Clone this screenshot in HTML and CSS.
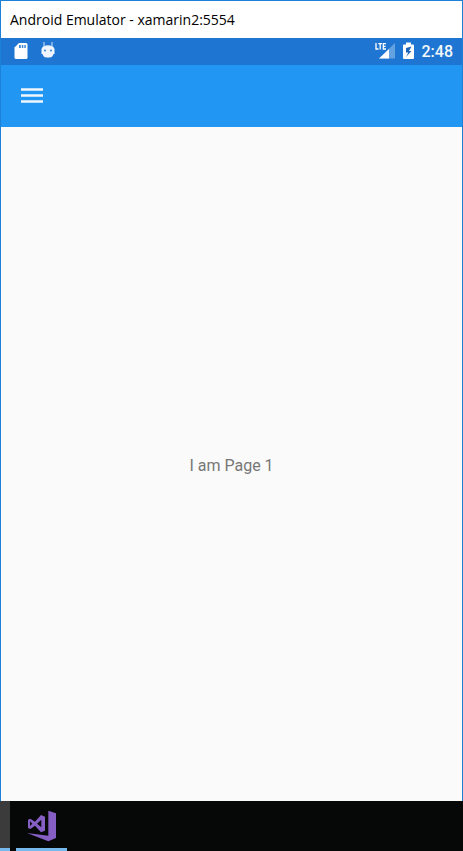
FILE: index.html
```html
<!DOCTYPE html>
<html lang="en">
<head>
<meta charset="utf-8">
<title>Android Emulator</title>
<meta name="viewport" content="width=device-width, initial-scale=1">
<link rel="stylesheet" href="styles.css">
</head>
<body>
<div class="window">
  <header class="titlebar">Android Emulator - xamarin2:5554</header>
  <div class="statusbar">
    <div class="status-group notices">
      <svg width="14" height="17" viewBox="0 0 14 17" aria-hidden="true">
        <path fill="#fff" d="M5 1h7q1.500 0 1.500 1.500v13q0 1.500-1.500 1.500H2q-1.500 0-1.500-1.500V5.500z"/>
        <path fill="#3f88d6" d="M5 3h1.800v3H5zM7.800 3h1.500v3H7.800zM10.300 3h1.500v3h-1.500z"/>
      </svg>
      <svg width="14" height="17" viewBox="0 0 14 17" aria-hidden="true">
        <path fill="none" stroke="#a9cbef" stroke-width="1.300" d="M3 0v4M11 0v4"/>
        <path fill="#eef5fd" d="M1.500 5Q3 3.300 7 3.300T12.500 5L13.500 7v5h-1q-1 3.500-4 3.500h-3q-3 0-4-3.500h-1V7z"/>
        <circle cx="4" cy="8.500" r=".9" fill="#1f76d2"/><circle cx="10" cy="8.500" r=".9" fill="#1f76d2"/>
      </svg>
    </div>
    <div class="status-group system">
      <svg width="20" height="17" viewBox="0 0 20 17" aria-hidden="true">
        <path fill="#63a1e0" d="M20 1v15.500H4z"/>
        <path fill="#fff" d="M14 7v9.500H4z"/>
        <path fill="#1f76d2" d="M0 0h12v8H0z"/>
        <path fill="none" stroke="#fff" stroke-width="1.300" d="M1 1v6h2.500M3.300 1.600h3.700M5.200 1.600v6M11 1.600H8.300V7H11M8.300 4.300h2.300"/>
      </svg>
      <svg width="11" height="17" viewBox="0 0 11 17" aria-hidden="true">
        <path fill="#fff" d="M3 0.500h5v2h2q1 0 1 1V16q0 1-1 1H1q-1 0-1-1V3.500q0-1 1-1h2z"/>
        <path fill="#1f66b8" d="M8.500 4.500L3 6v4.500h2.300L3 15l5.500-6H6z"/>
      </svg>
      <time class="clock">2:48</time>
    </div>
  </div>
  <nav class="appbar">
    <button class="menu" type="button" aria-label="Open menu">
      <svg width="22" height="16" viewBox="0 0 22 16" aria-hidden="true">
        <path fill="#eef6fe" d="M0 0.300h22v2.400H0zM0 6.300h22v2.400H0zM0 12.300h22v2.400H0z"/>
      </svg>
    </button>
  </nav>
  <main class="page">I am Page 1</main>
</div>
<footer class="taskbar">
  <span class="task previous"></span>
  <button class="task active" type="button" aria-label="Visual Studio">
    <svg width="30" height="32" viewBox="81 60 90 96" aria-hidden="true">
      <path fill="#865fc5" d="M145 62l23 8v74l-23 10-64-25 64 8z"/>
      <path fill="#865fc5" fill-rule="evenodd" d="M84 89l7-3 14 9 18-20 12 5v42l-12 5-18-20-14 10-7-3zM90 94v14l7-7zM124 89l-13 12 13 11z"/>
    </svg>
  </button>
</footer>
</body>
</html>
```
FILE: styles.css
```css
* {
  box-sizing: border-box;
}

body {
  margin: 0;
  min-height: 100vh;
  display: flex;
  flex-direction: column;
  font-family: Roboto, sans-serif;
}

button {
  border: 0;
  padding: 0;
  background: none;
}

svg {
  display: block;
}

.window {
  flex: 1;
  display: flex;
  flex-direction: column;
  border: 1px solid #1c82d8;
  border-bottom: 0;
  background: #fafafa;
}

.titlebar {
  padding: 9px 9px 8px;
  background: #fff;
  color: #000;
  font-family: "Open Sans", "Noto Sans", sans-serif;
  font-size: 14px;
  line-height: 20px;
}

.statusbar {
  display: flex;
  justify-content: space-between;
  height: 27px;
  padding: 4px 9px 0 13px;
  background: #1f76d2;
}

.status-group {
  display: flex;
  align-items: flex-start;
}

.notices {
  gap: 13px;
}

.system {
  gap: 8px;
}

.clock {
  color: #f4f8fd;
  font-size: 16px;
  font-weight: 500;
  line-height: 20px;
}

.appbar {
  display: flex;
  align-items: center;
  padding: 23px 20px;
  background: #2296f3;
}

.page {
  flex: 1;
  display: grid;
  place-items: center;
  padding-top: 4px;
  color: #777;
  font-size: 16px;
  line-height: 20px;
}

.taskbar {
  display: flex;
  gap: 6px;
  height: 50px;
  background: #060707;
}

.task {
  border-bottom: 3px solid #76b9ed;
}

.previous {
  width: 10px;
  background: #3b3b3b;
}

.active {
  display: flex;
  justify-content: center;
  width: 51px;
  padding-top: 9px;
}
```
